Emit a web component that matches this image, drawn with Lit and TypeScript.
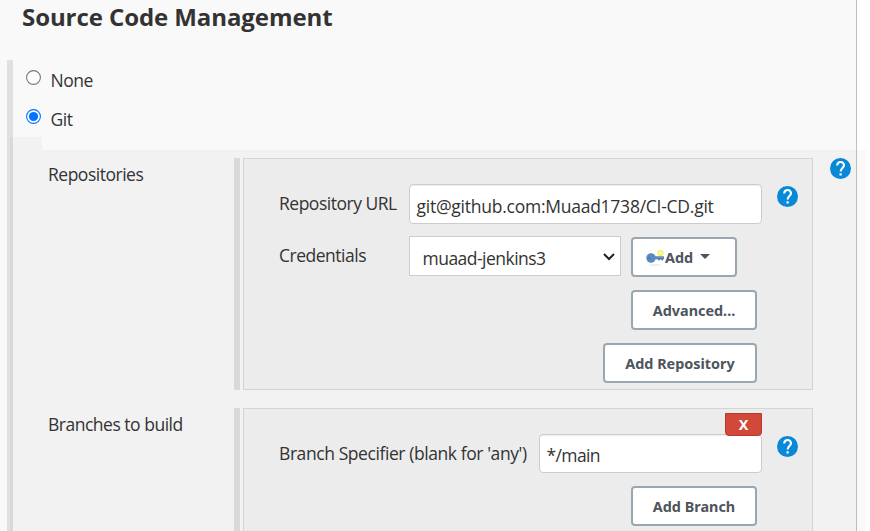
import { LitElement, html, css, svg } from "lit";
import { customElement } from "lit/decorators.js";

@customElement("help-button")
class HelpButton extends LitElement {
  static styles = css`
    :host { display: block; width: 21px; height: 21px; }
    svg { display: block; }
  `;
  render() {
    return html`<svg width="21" height="21" viewBox="0 0 21 21" role="img" aria-label="Help">
      <circle cx="10.5" cy="10.5" r="10.5" fill="#0789d8"></circle>
      <path d="M7.2 7.6C7.2 5.3 8.6 4 10.6 4s3.4 1.3 3.4 3.3c0 2.6-3.4 2.9-3.4 6.2" fill="none" stroke="#fff" stroke-width="2.1"></path>
      <rect x="9.5" y="15.3" width="2.2" height="2.2" fill="#fff"></rect>
    </svg>`;
  }
}

@customElement("app-root")
class AppRoot extends LitElement {
  static styles = css`
    * { box-sizing: border-box; }
    :host {
      display: block; position: relative; width: 870px; height: 531px; overflow: hidden;
      background: #fff; color: #333;
      font-family: "Open Sans", "Noto Sans", sans-serif; font-size: 17.5px; font-weight: 400; line-height: 24px;
    }
    .frame { display: flex; height: 531px; }
    .page { width: 857px; height: 531px; background: #f9f9f9; border-right: 1px solid #bfbfbf; flex: none; }
    .gutter { width: 9px; height: 381px; margin-top: 150px; background: #f9f9f9; }
    h2 { margin: 0; height: 60px; padding: 0 0 0 22px; font-size: 24px; line-height: 33px; font-weight: 700; white-space: nowrap; letter-spacing: -0.08px; }
    .scm { margin-left: 7px; height: 471px; border-left: 6px solid #e0e0e0; }
    .choice { display: flex; align-items: flex-start; height: 30px; padding-left: 13px; }
    .choice.first { padding-top: 8px; height: 47px; }
    .radio { width: 15px; height: 15px; margin: 2px 9.5px 0 0; display: block; }
    .label, .field-label { white-space: nowrap; }
    .label { letter-spacing: -0.5px; }
    .body { height: 394px; background: #f2f2f2; margin-left: -3px; border-left: 3px solid #d9d9d9; }
    .notch { height: 13px; margin-left: 29px; background: #f9f9f9; }
    .row { display: flex; align-items: flex-start; height: 250px; padding: 8px 0 0 35px; }
    .row-name { width: 186px; padding-top: 4px; white-space: nowrap; }
    .rail { width: 6px; height: 232px; background: #d9d9d9; margin-right: 3px; flex: none; }
    .panel { width: 570px; height: 232px; background: #ececec; border: 1px solid #d4d4d4; padding: 25px 14px 0 35px; flex: none; }
    .outer-help { margin-left: 17px; }
    .field { display: flex; width: 483px; justify-content: space-between; position: relative; }
    .field-row { display: flex; justify-content: space-between; }
    .field-label { padding-top: 7px; }
    .input { height: 40px; border: 1px solid #ccc; border-radius: 4px; background: #fff; padding: 9px 6.5px 0; white-space: nowrap; box-shadow: inset 0 1px 1px rgba(0,0,0,.07); }
    .url { width: 353px; letter-spacing: -0.25px; }
    .branch { width: 223px; height: 39px; padding-top: 8px; letter-spacing: -0.62px; }
    .credentials { display: flex; width: 458px; margin-top: 12px; }
    .credentials .field-label { width: 130px; }
    .select { display: flex; justify-content: space-between; width: 212px; height: 40px; padding: 9px 5px 0 12.5px; background: #fff; border: 1px solid #ccc; letter-spacing: -0.52px; }
    .select svg { margin-top: 6px; }
    .btn { display: flex; align-items: center; justify-content: center; height: 40px; padding-top: 1px; border: 2px solid #9aa7b0; border-radius: 4px; background: #fff; color: #4d545d; font-family: "Noto Sans", "Open Sans", sans-serif; font-weight: 700; font-size: 14.4px; line-height: 20px; white-space: nowrap; }
    .add { width: 106px; margin: 1px 0 0 10px; justify-content: flex-start; padding-left: 13px; }
    .add .caret { margin: -3px 0 0 7px; }
    .stack { width: 478px; display: flex; flex-direction: column; align-items: flex-end; gap: 13px; margin-top: 13px; }
    .w126 { width: 126px; }
    .w154 { width: 154px; }
    .delete { position: absolute; right: 0; top: -21px; width: 37px; height: 23px; display: flex; align-items: center; justify-content: center; background: #d24939; border: 1px solid #b8392c; border-radius: 0 0 4px 4px; color: #fff; font-family: "Noto Sans", sans-serif; font-size: 14.4px; font-weight: 700; line-height: 20px; }
    .inner-help { margin-top: 2px; }
    .ls { letter-spacing: -0.49px; }
    .specifier { letter-spacing: -0.42px; }
  `;

  radio(on: boolean) {
    return html`<svg class="radio" viewBox="0 0 15 15">
      <circle cx="7.5" cy="7.5" r="6.9" fill="#fff" stroke=${on ? "#0075ff" : "#767676"} stroke-width="1.1"></circle>
      ${on ? svg`<circle cx="7.5" cy="7.5" r="4.6" fill="#0075ff"></circle>` : null}
    </svg>`;
  }

  render() {
    return html`<div class="frame"><div class="page">
      <h2>Source Code Management</h2>
      <div class="scm">
        <div class="choice first">${this.radio(false)}<span class="label">None</span></div>
        <div class="choice">${this.radio(true)}<span class="label">Git</span></div>
        <div class="body">
          <div class="notch"></div>
          <div class="row">
            <div class="row-name"><span class="ls">Repositories</span></div>
            <div class="rail"></div>
            <div class="panel">
              <div class="field-row">
                <div class="field">
                  <span class="field-label ls">Repository URL</span>
                  <div class="input url">git@github.com:Muaad1738/CI-CD.git</div>
                </div>
                <help-button class="inner-help"></help-button>
              </div>
              <div class="credentials">
                <span class="field-label ls">Credentials</span>
                <div class="select"><span>muaad-jenkins3</span>
                  <svg width="12" height="10" viewBox="0 0 12 10"><path d="M1 2l5 5 5-5" fill="none" stroke="#222" stroke-width="2"></path></svg>
                </div>
                <div class="btn add">
                  <svg width="19" height="18" viewBox="0 0 19 18">
                    <ellipse cx="9" cy="16" rx="6" ry="1" fill="#eee"></ellipse>
                    <circle cx="14.5" cy="4" r="3.2" fill="#f8f274"></circle><circle cx="14.5" cy="4" r="1.3" fill="#fffbc0"></circle>
                    <path d="M8 7.2h10v3h-1v1h-2v-1h-1v1h-2v-1H8z" fill="#557fae"></path>
                    <path d="M8 7.4h10v1H8z" fill="#86a9d0"></path>
                    <ellipse cx="5" cy="9" rx="4.7" ry="4.8" fill="#5b89c4"></ellipse><ellipse cx="3.1" cy="9" rx="1" ry="1.2" fill="#4a77b2"></ellipse>
                  </svg><span>Add</span>
                  <svg class="caret" width="10" height="5" viewBox="0 0 10 5"><path d="M0 0h10L5 5z" fill="#4d545d"></path></svg>
                </div>
              </div>
              <div class="stack">
                <div class="btn w126">Advanced...</div>
                <div class="btn w154">Add Repository</div>
              </div>
            </div>
            <help-button class="outer-help"></help-button>
          </div>
          <div class="row">
            <div class="row-name"><span class="ls">Branches to build</span></div>
            <div class="rail"></div>
            <div class="panel">
              <div class="field-row">
                <div class="field">
                  <span class="field-label specifier">Branch Specifier (blank for 'any')</span>
                  <div class="input branch">*/main</div>
                  <div class="delete">X</div>
                </div>
                <help-button class="inner-help"></help-button>
              </div>
              <div class="stack"><div class="btn w126">Add Branch</div></div>
            </div>
          </div>
        </div>
      </div>
    </div><div class="gutter"></div></div>`;
  }
}
